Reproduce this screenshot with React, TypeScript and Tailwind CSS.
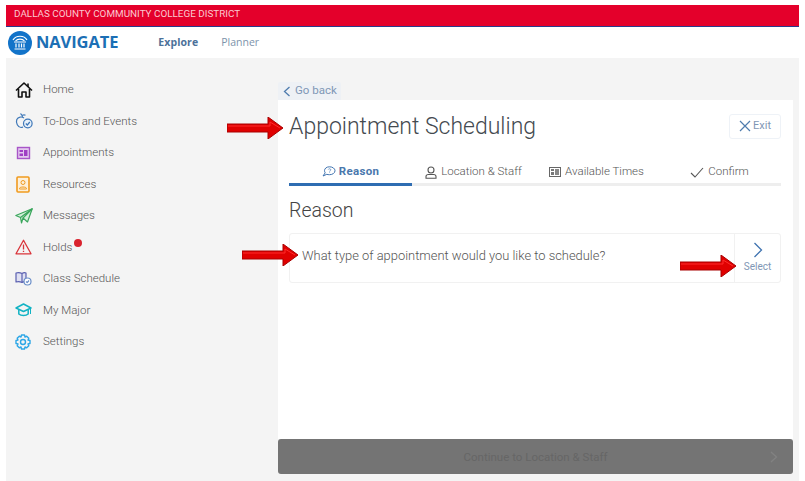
import React from "react";

function Arrow({ className }: { className: string }) {
  return (
    <svg className={className} width="58" height="22" viewBox="0 0 58 22">
      <path d="M0 7H41V0L56 11L41 22V15H0Z" fill="#e00000" stroke="#a80000" strokeWidth="1" />
      <path d="M1 9H43V5L53 11" fill="none" stroke="#ff2a2a" strokeWidth="1" />
    </svg>
  );
}

const nav: { label: string; icon: React.ReactNode; dot?: boolean }[] = [
  {
    label: "Home",
    icon: (
      <svg width="18" height="18" viewBox="0 0 18 18" fill="none" stroke="#111" strokeWidth="1.600" strokeLinejoin="round">
        <path d="M1 9.500L9 2L17 9.500" />
        <path d="M3.500 8V16H7V11H11V16H14.500V8" />
        <path d="M13 2.500V6" />
      </svg>
    ),
  },
  {
    label: "To-Dos and Events",
    icon: (
      <svg width="18" height="18" viewBox="0 0 18 18" fill="none" stroke="#3f78b8" strokeWidth="1.200">
        <path d="M9 6C7 4.500 3 4.500 1.800 7.500C0.500 11 3 15.500 6 15.500C7 15.500 7.500 15.200 8 15" />
        <path d="M5.500 1.500C6.800 2.500 7.500 3.500 7.500 5.300M7.500 3.300C8.500 2.800 9.500 2.800 10.500 3.300" />
        <circle cx="12.800" cy="11.500" r="4.300" fill="#e8f1fa" />
        <path d="M10.800 11.500L12.300 13L14.800 10" />
      </svg>
    ),
  },
  {
    label: "Appointments",
    icon: (
      <svg width="16" height="14" viewBox="0 0 16 14" className="ml-[1px]">
        <rect x="1.500" y="1.500" width="12" height="11" fill="#e3c8ee" stroke="#a855c8" strokeWidth="1.400" />
        <rect x="3.500" y="4" width="3.500" height="2" fill="#a03fc4" />
        <rect x="8" y="4" width="3.500" height="6" fill="#a03fc4" />
        <rect x="3.500" y="7.500" width="3.500" height="2.500" fill="#a03fc4" />
      </svg>
    ),
  },
  {
    label: "Resources",
    icon: (
      <svg width="14" height="17" viewBox="0 0 14 17" fill="none" stroke="#f09a1e" className="ml-[1px]">
        <rect x="1" y="1" width="12" height="15" rx="1" fill="#fdf0da" strokeWidth="1.600" />
        <circle cx="7" cy="6.500" r="2" strokeWidth="1" />
        <path d="M3.500 12.500C3.500 10.500 10.500 10.500 10.500 12.500V13H3.500Z" strokeWidth="1" />
      </svg>
    ),
  },
  {
    label: "Messages",
    icon: (
      <svg width="18" height="16" viewBox="0 0 18 16" fill="#d5efdc" stroke="#3aa65c" strokeWidth="1.200" strokeLinejoin="round">
        <path d="M0.800 7.500L17.200 0.800L12.500 14L8 10L6.500 15L5.500 9.500Z" />
        <path d="M5.500 9.500L17.200 0.800L8 10" fill="none" />
      </svg>
    ),
  },
  {
    label: "Holds",
    dot: true,
    icon: (
      <svg width="17" height="16" viewBox="0 0 17 16" fill="none" stroke="#d9343a" strokeWidth="1.300" strokeLinejoin="round">
        <path d="M8.500 1.200L16 14.800H1Z" />
        <path d="M8.500 5.500V10.500M8.500 11.800V13" />
      </svg>
    ),
  },
  {
    label: "Class Schedule",
    icon: (
      <svg width="17" height="17" viewBox="0 0 17 17" fill="none" stroke="#5a5fb0" strokeWidth="1.200" strokeLinejoin="round">
        <path d="M7 3.500C5 2.500 3 2.500 1 3V12C3 11.500 5 11.500 7 12.500C8.500 11.500 10 11.500 11 11.700V3C10 2.600 8.500 2.600 7 3.500ZM7 3.500V12.500" fill="#dfe0f2" />
        <circle cx="12.500" cy="11.500" r="3.500" fill="#fff" stroke="#6a8ec8" />
        <path d="M11 11.500L12.200 12.700L14 10.500" stroke="#6a8ec8" />
      </svg>
    ),
  },
  {
    label: "My Major",
    icon: (
      <svg width="17" height="14" viewBox="0 0 17 14" fill="none" stroke="#12b3c4" strokeWidth="1.500" strokeLinejoin="round">
        <path d="M8.500 1L16 5L8.500 8.500L1 5Z" />
        <path d="M3.800 6.500V11C6 13 11 13 13.200 11V6.500" />
        <path d="M15.500 5.500V11" strokeWidth="1" />
      </svg>
    ),
  },
  {
    label: "Settings",
    icon: (
      <svg width="16" height="16" viewBox="0 0 16 16" fill="none" stroke="#2ca6e6" strokeWidth="1.400" strokeLinejoin="round">
        <path d="M6.500 1H9.500L10 3L11.700 2.200L13.800 4.300L13 6L15 6.500V9.500L13 10L13.800 11.700L11.700 13.800L10 13L9.500 15H6.500L6 13L4.300 13.800L2.200 11.700L3 10L1 9.500V6.500L3 6L2.200 4.300L4.300 2.200L6 3Z" />
        <circle cx="8" cy="8" r="2.500" />
      </svg>
    ),
  },
];

const Chat = () => (
  <svg width="14" height="12" viewBox="0 0 14 12" fill="none" stroke="#3f73b0" strokeWidth="1">
    <path d="M7.500 0.800C4.500 0.800 2.500 2.500 2.500 4.700C2.500 5.500 2.800 6.200 3.200 6.800L1 10L4.800 8.300C5.600 8.600 6.500 8.700 7.500 8.700C10.500 8.700 13 7 13 4.700C13 2.500 10.500 0.800 7.500 0.800Z" />
    <path d="M6.300 3.500C6.500 2.500 8.800 2.500 8.800 3.800C8.800 4.700 7.600 4.700 7.600 5.600M7.600 6.400V7" strokeWidth="0.700" />
  </svg>
);
const Person = () => (
  <svg width="12" height="13" viewBox="0 0 12 13" fill="none" stroke="#555" strokeWidth="1.100">
    <circle cx="6" cy="4" r="3" />
    <path d="M1 12.300V10.500C1 9 2.500 8.500 3.500 8.500H8.500C9.500 8.500 11 9 11 10.500V12.300Z" />
  </svg>
);
const Cal = () => (
  <svg width="12" height="10" viewBox="0 0 12 10">
    <rect x="0.500" y="0.500" width="11" height="9" fill="none" stroke="#666" />
    <rect x="2" y="2" width="3" height="2" fill="#777" />
    <rect x="6" y="2" width="4" height="6" fill="#888" />
    <rect x="2" y="5" width="3" height="3" fill="#777" />
  </svg>
);
const Check = () => (
  <svg width="14" height="11" viewBox="0 0 14 11" fill="none" stroke="#555" strokeWidth="1.100">
    <path d="M1 6L5 10L13 1" />
  </svg>
);

const tabs = [
  { label: "Reason", icon: <Chat />, active: true },
  { label: "Location & Staff", icon: <Person /> },
  { label: "Available Times", icon: <Cal /> },
  { label: "Confirm", icon: <Check /> },
];

export default function App() {
  return (
    <div className="relative w-[805px] h-[481px] overflow-hidden bg-white px-[6px] pt-[5px] font-['Roboto',sans-serif]">
      <div className="h-[22px] bg-[#e4002b] border-b-[1.5px] border-[#2a3a8c] pl-2 pt-[2px] text-[9.900px] leading-[13px] text-[#fbc9d0]">
        DALLAS COUNTY COMMUNITY COLLEGE DISTRICT
      </div>
      <header className="h-[31px] flex items-center">
        <svg className="ml-[2px] shrink-0" width="24" height="24" viewBox="0 0 24 24">
          <circle cx="12" cy="12" r="12" fill="#1273c9" />
          <g fill="none" stroke="#fff" strokeWidth="1.200">
            <path d="M5 9C8 4 16 4 19 9" />
            <path d="M7.500 10C9.500 7.500 14.500 7.500 16.500 10" />
            <path d="M6 11H18M6.500 18H17.500M8 12.500V16.500M11 12.500V16.500M13.500 12.500V16.500M16 12.500V16.500" />
          </g>
        </svg>
        <span className="ml-[4px] text-[16.500px] font-bold tracking-[-0.1px] text-[#1c6fb5] font-['Open_Sans',sans-serif]">NAVIGATE</span>
        <span className="ml-[40px] text-[10.500px] font-bold tracking-[0.1px] text-[#4c7199] font-['Open_Sans',sans-serif]">Explore</span>
        <span className="ml-[23px] text-[10.500px] text-[#7d93ab] font-['Open_Sans',sans-serif]">Planner</span>
      </header>
      <div className="flex h-[423px] bg-[#f4f4f4]">
        <nav className="w-[272px] shrink-0 pt-[16px]">
          {nav.map((n) => (
            <div key={n.label} className="h-[31.5px] flex items-center">
              <span className="w-[37px] pl-[9px] flex items-center shrink-0">{n.icon}</span>
              <span className="text-[11.500px] font-light text-[#555]">{n.label}</span>
              {n.dot && <span className="ml-[2px] -mt-[8px] w-2 h-2 rounded-full bg-[#d9232e]" />}
            </div>
          ))}
        </nav>
        <main className="w-[515px] shrink-0 flex flex-col">
          <div className="h-[42px] flex items-end">
            <div className="h-[18px] w-[63px] flex items-center gap-[4px] pl-[5px] bg-[#eef1f5] rounded-t-[2px]">
              <svg width="8" height="11" viewBox="0 0 8 11" fill="none" stroke="#4f7cae" strokeWidth="1.300"><path d="M6.500 1L1.500 5.500L6.500 10" /></svg>
              <span className="text-[11.500px] text-[#7f97b5]">Go back</span>
            </div>
          </div>
          <div className="flex-1 bg-white pl-[11px] pr-[12px] flex flex-col">
            <div className="h-[53px] flex items-center justify-between">
              <h1 className="text-[23px] leading-none font-light text-[#444a50]">Appointment Scheduling</h1>
              <button className="h-[25px] w-[52px] mt-[-1px] border border-[#eef2f7] rounded-[3px] flex items-center justify-center gap-[2px]">
                <svg width="12" height="12" viewBox="0 0 12 12" fill="none" stroke="#4f7cae" strokeWidth="1.200"><path d="M1 1L11 11M11 1L1 11" /></svg>
                <span className="text-[11px] text-[#7f97b5]">Exit</span>
              </button>
            </div>
            <div className="grid grid-cols-4 h-[33px] border-b-[3px] border-[#eeeeee]">
              {tabs.map((t) => (
                <div
                  key={t.label}
                  className={t.active
                    ? "h-[33px] pt-[8px] border-b-[3px] border-[#2f6db2] flex items-center justify-center gap-[3px] text-[11.500px] font-bold tracking-[0.3px] text-[#4a78ad]"
                    : "h-[30px] pt-[8px] flex items-center justify-center gap-[4px] text-[11.500px] font-light text-[#555]"}
                >
                  {t.icon}
                  <span>{t.label}</span>
                </div>
              ))}
            </div>
            <h2 className="mt-[13px] text-[19.500px] leading-[24px] font-light text-[#444]">Reason</h2>
            <div className="mt-[10px] h-[50px] border border-[#f1f1f1] rounded-[3px] flex">
              <div className="flex-1 pl-[12px] pt-[13px] text-[12.900px] leading-[18px] font-light text-[#555]">
                What type of appointment would you like to schedule?
              </div>
              <div className="w-[46px] border-l border-[#f1f1f1] flex flex-col items-center pt-[8px]">
                <svg width="10" height="16" viewBox="0 0 10 16" fill="none" stroke="#3f73b0" strokeWidth="1.300"><path d="M1.500 1L8.500 8L1.500 15" /></svg>
                <span className="mt-[3px] text-[10px] leading-[12px] text-[#7f97b5]">Select</span>
              </div>
            </div>
            <div className="flex-1" />
          </div>
          <div className="h-[35px] mb-[7px] pt-[2px] bg-[#747474] rounded-[3px] flex items-center relative">
            <span className="w-full text-center text-[11.500px] text-[#666666]">Continue to Location &amp; Staff</span>
            <svg className="absolute right-[15px] top-[12px]" width="8" height="12" viewBox="0 0 8 12" fill="none" stroke="#828282" strokeWidth="1.300"><path d="M1 1L6.500 6L1 11" /></svg>
          </div>
        </main>
      </div>
      <Arrow className="absolute left-[227px] top-[117px]" />
      <Arrow className="absolute left-[242px] top-[244px]" />
      <Arrow className="absolute left-[680px] top-[255px]" />
    </div>
  );
}
